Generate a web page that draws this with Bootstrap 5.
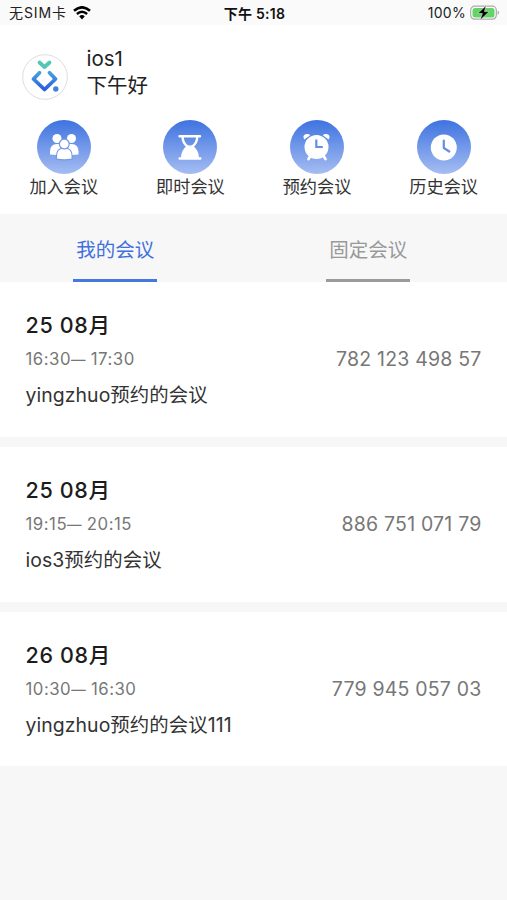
<!DOCTYPE html>
<html lang="zh-CN">
<head>
<meta charset="utf-8">
<meta name="viewport" content="width=device-width, initial-scale=1">
<title>会议</title>
<link rel="stylesheet" href="https://cdn.jsdelivr.net/npm/bootstrap@5.3.0/dist/css/bootstrap.min.css">
<style>
body{font-family:Inter,"Noto Sans CJK SC",sans-serif;background:#f7f7f7;color:#333;min-height:900px;overflow:hidden}
.status{height:25px;background:#fafafa;font-size:14px;line-height:27px;color:#222;padding:0 7px 0 9px}
.status>div{flex:1 1 0}
.carrier{letter-spacing:.9px}
.wifi{margin-left:6px}
.clock{font-weight:600;letter-spacing:.25px;color:#111}
.percent{letter-spacing:.3px}
.profile{height:96px;padding:20px 22px 0}
.avatar{width:46px;height:46px;margin-top:9px;margin-right:18.5px}
.who{font-size:20.5px;line-height:27px;color:#222}
.actions{height:93px;padding-left:.5px}
.actions svg{margin-top:-1px}
.actions span{font-size:17.2px;line-height:25px;color:#333}
.tabs{height:68px}
.tabs>div{padding-right:23px}
.tabs>div+div{padding-right:24px}
.tab-label{width:84px;height:68px;font-size:19.5px;line-height:73px;border-bottom:3px solid #9b9b9b;color:#999}
.tab-label.on{color:#3f70dc;border-color:#4577e0}
.meeting{height:155px;margin-bottom:10px;padding:28px 25.5px 0}
.meeting:last-child{height:154px}
.day{font-size:21.5px;line-height:30px;font-weight:500;letter-spacing:.65px;color:#1c1c1c}
.line{height:39px}
.time{font-size:16.8px;color:#777;letter-spacing:.5px}
.dash{letter-spacing:0;font-size:14.5px}
.code{font-size:19.5px;color:#777;letter-spacing:.2px}
.title{font-size:19.4px;line-height:33px;color:#333;letter-spacing:.08px}
</style>
</head>
<body>
<header class="bg-white">
  <div class="status d-flex">
    <div class="d-flex align-items-center"><span class="carrier">无SIM卡</span>
      <svg class="wifi" width="18" height="14" viewBox="0 0 18 14" fill="none" stroke="#000"><path d="M1 4.800Q9-2.200 17 4.800" stroke-width="2.600"/><path d="M3.900 8Q9 3.500 14.100 8" stroke-width="2.400"/><path d="M6.200 10.200Q9 7.800 11.800 10.200L9 13.400Z" fill="#000" stroke="none"/></svg>
    </div>
    <div class="clock text-center">下午 5:18</div>
    <div class="d-flex align-items-center justify-content-end"><span class="percent">100%</span>
      <svg class="ms-1" width="30" height="16" viewBox="0 0 30 16"><rect x=".7" y="1.200" width="25.600" height="13" rx="4" fill="#fff" stroke="#aaa" stroke-width="1.200"/><rect x="2.500" y="3" width="22" height="9.400" rx="2.500" fill="#63d466"/><path d="M27.600 5.500q3 2.200 0 4.400Z" fill="#aaa"/><path d="M16.200 .5 7.800 8.500h4.600L10 15.200 19.200 6.600h-4.800Z" fill="#000" stroke="#fff" stroke-width=".5"/></svg>
    </div>
  </div>
  <div class="profile d-flex">
    <svg class="avatar" viewBox="0 0 46 46" fill="none"><defs><linearGradient id="logo" x1="0" y1="0" x2="0" y2="1"><stop stop-color="#459fdf"/><stop offset="1" stop-color="#2f5ce0"/></linearGradient></defs><circle cx="23" cy="23" r="22.300" fill="#fff" stroke="#ddd"/><path d="m17.500 8.500 5 4.500 5-4.500" stroke="#54c8b4" stroke-width="3.800" stroke-linecap="round" stroke-linejoin="round"/><path d="m17.500 18.800-6 6.200L22.500 35.500 33.500 25l-6-6.200" stroke="url(#logo)" stroke-width="3.800" stroke-linecap="round" stroke-linejoin="round"/><circle cx="33.800" cy="35" r="2.700" fill="#3f82dd"/></svg>
    <div class="who"><div>ios1</div><div>下午好</div></div>
  </div>
  <svg width="0" height="0" class="d-block"><defs><linearGradient id="sky" x1="0" y1="0" x2="0" y2="1"><stop stop-color="#3e73e0"/><stop offset="1" stop-color="#a5bdf2"/></linearGradient></defs></svg>
  <nav class="actions row g-0 text-center">
    <div class="col d-flex flex-column align-items-center"><svg width="54" height="54" viewBox="0 0 54 54"><circle cx="27" cy="27" r="27" fill="url(#sky)"/><g fill="#fff"><circle cx="20" cy="18.500" r="4.500"/><circle cx="34.500" cy="18.500" r="4.500"/><path d="M13 34.500v-3q0-7.500 7-7.500h14.500q7 0 7 7.500v3q-14 1-28.500 0Z"/></g><g fill="#fff" stroke="#739ae8" stroke-width="1.200"><path d="M19.500 39.200V36q0-8 7.800-8t7.800 8v3.200q-7.800 1.500-15.600 0Z"/><circle cx="27.300" cy="24" r="4.900"/></g></svg><span>加入会议</span></div>
    <div class="col d-flex flex-column align-items-center"><svg width="54" height="54" viewBox="0 0 54 54"><circle cx="27" cy="27" r="27" fill="url(#sky)"/><path d="M16.500 16.200h20.500M19.500 16.200q0 7.500 6 11h2.800q6-3.500 6-11" fill="none" stroke="#fff" stroke-width="2.400" stroke-linecap="round"/><path d="M24.200 25.500h5.400q6 4.500 6.300 11.700h1.300a1.300 1.300 0 0 1 0 2.600h-20.500a1.300 1.300 0 0 1 0-2.600h1.300q.3-7.200 6.200-11.700Z" fill="#fff"/></svg><span>即时会议</span></div>
    <div class="col d-flex flex-column align-items-center"><svg width="54" height="54" viewBox="0 0 54 54"><circle cx="27" cy="27" r="27" fill="url(#sky)"/><path d="m20.500 36-2 3M33.500 36l2 3" stroke="#fff" stroke-width="2.800" stroke-linecap="round"/><path d="M14.300 19.500q-2.500-4.500 2-5.500 2.700-.3 4 1.200ZM38.700 19.500q2.500-4.500-2-5.500-2.700-.3-4 1.200Z" fill="#fff"/><circle cx="26.500" cy="27" r="12" fill="#fff"/><path d="M26.300 19.500V27h6.500" fill="none" stroke="#658fe5" stroke-width="2.200"/></svg><span>预约会议</span></div>
    <div class="col d-flex flex-column align-items-center"><svg width="54" height="54" viewBox="0 0 54 54"><circle cx="27" cy="27" r="27" fill="url(#sky)"/><circle cx="26.800" cy="27.500" r="13" fill="#fff"/><path d="M26.800 20.500V28l5.500 3.500" fill="none" stroke="#658fe5" stroke-width="2.200" stroke-linecap="round" stroke-linejoin="round"/></svg><span>历史会议</span></div>
  </nav>
</header>
<div class="tabs row g-0">
  <div class="col-6 d-flex justify-content-center"><div class="tab-label on text-center">我的会议</div></div>
  <div class="col-6 d-flex justify-content-center"><div class="tab-label text-center">固定会议</div></div>
</div>
<main>
  <section class="meeting bg-white"><div class="day">25 08月</div><div class="line d-flex align-items-center justify-content-between"><span class="time">16:30<span class="dash">—</span> 17:30</span><span class="code">782 123 498 57</span></div><div class="title">yingzhuo预约的会议</div></section>
  <section class="meeting bg-white"><div class="day">25 08月</div><div class="line d-flex align-items-center justify-content-between"><span class="time">19:15<span class="dash">—</span> 20:15</span><span class="code">886 751 071 79</span></div><div class="title">ios3预约的会议</div></section>
  <section class="meeting bg-white"><div class="day">26 08月</div><div class="line d-flex align-items-center justify-content-between"><span class="time">10:30<span class="dash">—</span> 16:30</span><span class="code">779 945 057 03</span></div><div class="title">yingzhuo预约的会议111</div></section>
</main>
<script src="https://cdn.jsdelivr.net/npm/bootstrap@5.3.0/dist/js/bootstrap.bundle.min.js"></script>
</body>
</html>
